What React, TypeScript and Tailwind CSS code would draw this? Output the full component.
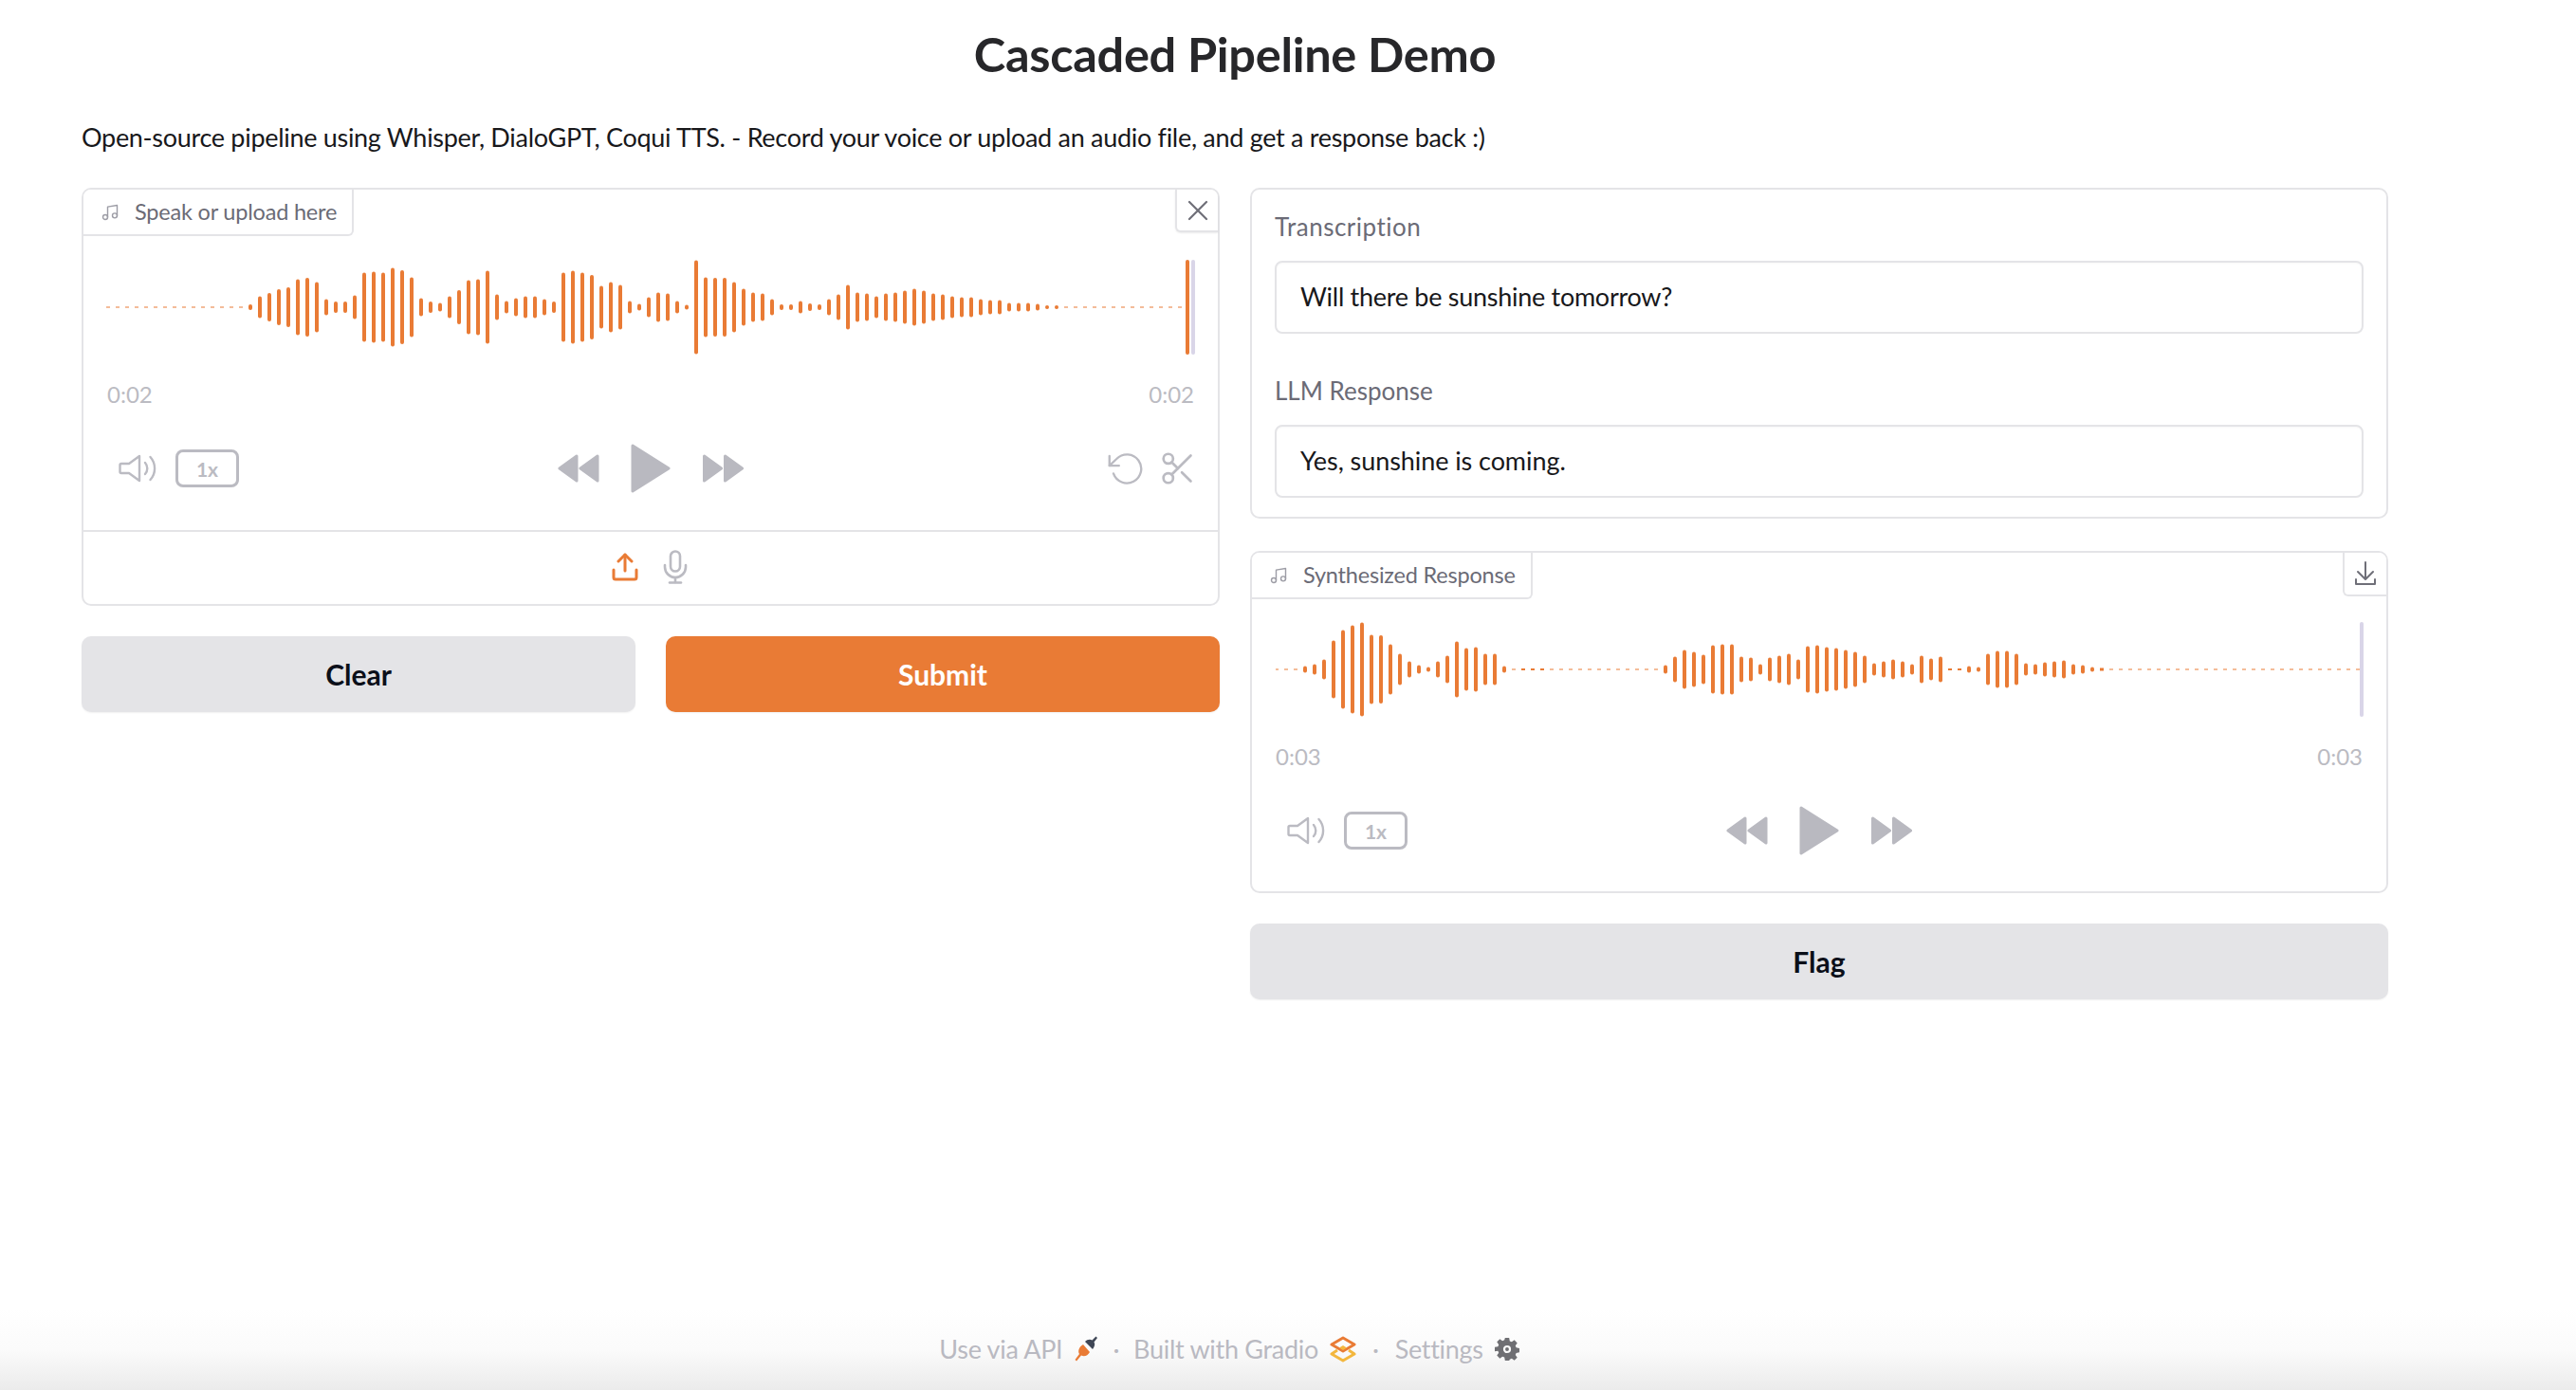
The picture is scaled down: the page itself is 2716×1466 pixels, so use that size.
const ORANGE = "#e97b35";

const leftA = [6,23,30,38,42,59,62,53,17,12,12,25,73,75,73,83,78,63,19,12,9,23,36,57,59,77,27,13,19,23,23,17,12,73,77,73,68,45,53,47,13,7,21,31,29,13,5,99,63,62,62,53,39,31,29,17,6,6,13,8,6,17,27,47,31,29,23,29,31,35,39,35,29,27,23,21,21,17,15,15,9,9,9,7,4,4];
const synthA = [7,11,21,61,83,93,99,73,72,53,33,17,9,5,17,29,59,45,47,33,33,7];
const synthB = [9,27,41,37,31,51,53,53,27,25,11,25,29,33,21,49,51,47,45,41,37,29,13,17,21,17,11,29,23,27,2,2,7,5,33,39,39,33,13,11,15,17,19,11,9,5,3];

function leftBars() {
  const out: { x: number; h: number }[] = [];
  for (let i = 0; i < 15; i++) out.push({ x: 114 + i * 10, h: 1 });
  leftA.forEach((h, i) => out.push({ x: 264 + i * 10, h }));
  for (let i = 0; i < 13; i++) out.push({ x: 1124 + i * 10, h: 1 });
  return out;
}

function synthBars() {
  const out: { x: number; h: number }[] = [];
  for (let i = 0; i < 3; i++) out.push({ x: 1346 + i * 10, h: 1 });
  synthA.forEach((h, i) => out.push({ x: 1376 + i * 10, h }));
  for (let i = 0; i < 16; i++) out.push({ x: 1596 + i * 10, h: i > 0 && i < 4 ? 2 : 1 });
  synthB.forEach((h, i) => out.push({ x: 1756 + i * 10, h }));
  for (let i = 0; i < 27; i++) out.push({ x: 2226 + i * 10, h: 1 });
  return out;
}

function Wave({ bars, originX, extra }: { bars: { x: number; h: number }[]; originX: number; extra: React.ReactNode }) {
  return (
    <svg width="1152" height="100" viewBox={`${originX} 0 1152 100`} className="block">
      {bars.map((b, i) => (
        <rect key={i} x={b.x - 2} y={50 - b.h / 2} width="4" height={b.h} rx={b.h > 3 ? 2 : 0} fill={ORANGE} />
      ))}
      {extra}
    </svg>
  );
}

function MusicIcon() {
  return (
    <svg width="20" height="20" viewBox="0 0 24 24" fill="none" stroke="#9d9da6" strokeWidth="1.7" strokeLinecap="round" strokeLinejoin="round">
      <path d="M9 18V5l12-2v13" />
      <circle cx="6" cy="18" r="3" />
      <circle cx="18" cy="16" r="3" />
    </svg>
  );
}

function Volume() {
  return (
    <svg width="40" height="30" viewBox="0 0 40 30" fill="none" stroke="#bbbbc2" strokeWidth="2.4" strokeLinecap="round" strokeLinejoin="round">
      <path d="M22 2 L11 10 H3 a1.5 1.5 0 0 0 -1.5 1.5 V18.5 a1.5 1.5 0 0 0 1.5 1.5 H11 L22 28 Z" />
      <path d="M28 9 a9 9 0 0 1 0 12" />
      <path d="M33.500 3 a18 18 0 0 1 0 24" />
    </svg>
  );
}

function Rewind() {
  return (
    <svg width="44" height="30" viewBox="0 0 44 30" fill="#b9b9c0" stroke="#b9b9c0" strokeWidth="3" strokeLinejoin="round">
      <path d="M20 2 L2 15 L20 28 Z" />
      <path d="M42 2 L24 15 L42 28 Z" />
    </svg>
  );
}

function Forward() {
  return (
    <svg width="45" height="30" viewBox="0 0 44 30" fill="#b9b9c0" stroke="#b9b9c0" strokeWidth="3" strokeLinejoin="round">
      <path d="M2 2 L20 15 L2 28 Z" />
      <path d="M24 2 L42 15 L24 28 Z" />
    </svg>
  );
}

function Play() {
  return (
    <svg width="42" height="52" viewBox="0 0 42 52" fill="#b9b9c0" stroke="#b9b9c0" strokeWidth="3" strokeLinejoin="round">
      <path d="M2 2 L40 26 L2 50 Z" />
    </svg>
  );
}

function Speed() {
  return (
    <div className="w-[67px] h-[40px] ml-[20px] border-[3px] border-[#bbbbc2] rounded-[8px] flex items-center justify-center text-[#bbbbc2] text-[21px] font-bold leading-none">
      1x
    </div>
  );
}

function Undo() {
  return (
    <svg width="37" height="36" viewBox="0 1 22 21.500" fill="none" stroke="#bbbbc2" strokeWidth="1.4" strokeLinecap="round" strokeLinejoin="round">
      <polyline points="1 4 1 10 7 10" />
      <path d="M3.51 15a9 9 0 1 0 2.13-9.36L1 10" />
    </svg>
  );
}

function Scissors() {
  return (
    <svg width="33" height="34" viewBox="2 2 19.500 20" fill="none" stroke="#bbbbc2" strokeWidth="1.6" strokeLinecap="round" strokeLinejoin="round">
      <circle cx="6" cy="6" r="3" />
      <circle cx="6" cy="18" r="3" />
      <line x1="20" y1="4" x2="8.12" y2="15.88" />
      <line x1="14.47" y1="14.48" x2="20" y2="20" />
      <line x1="8.12" y1="8.12" x2="12" y2="12" />
    </svg>
  );
}

function Controls({ right }: { right?: boolean }) {
  return (
    <div className="grid grid-cols-[1fr_auto_1fr] items-center h-[52px] mt-[35px] px-[37px]">
      <div className="flex items-center">
        <Volume />
        <Speed />
      </div>
      <div className="flex items-center gap-[33px]">
        <Rewind />
        <Play />
        <Forward />
      </div>
      <div className="flex items-center justify-end gap-[20px] -mr-[11px]">
        {right && (
          <>
            <Undo />
            <Scissors />
          </>
        )}
      </div>
    </div>
  );
}

function Times({ t }: { t: string }) {
  return (
    <div className="flex justify-between px-[25px] mt-[25px] text-[24px] leading-[34px] text-[#bbbbc2]">
      <span>{t}</span>
      <span>{t}</span>
    </div>
  );
}

function Tab({ label }: { label: string }) {
  return (
    <div className="absolute left-0 top-0 h-[49px] flex items-center gap-[16px] pl-[18px] pr-[16px] bg-white border-r-2 border-b-2 border-[#e4e4e7] rounded-br-[6px] rounded-tl-[8px]">
      <MusicIcon />
      <span className="text-[23.500px] text-[#6b6b76] leading-none tracking-[-0.2px]">{label}</span>
    </div>
  );
}

function Upload() {
  return (
    <svg width="28" height="30" viewBox="0 0 28 30" fill="none" stroke={ORANGE} strokeWidth="3" strokeLinecap="round" strokeLinejoin="round">
      <path d="M14 19 V2" />
      <path d="M7 9 L14 2 L21 9" />
      <path d="M2 18 V26 a2 2 0 0 0 2 2 H24 a2 2 0 0 0 2 -2 V18" />
    </svg>
  );
}

function Mic() {
  return (
    <svg width="26" height="36" viewBox="0 0 26 36" fill="none" stroke="#bbbbc2" strokeWidth="2.6" strokeLinecap="round" strokeLinejoin="round">
      <rect x="8" y="1.500" width="10" height="21" rx="5" />
      <path d="M2 16 V18 a11 11 0 0 0 22 0 V16" />
      <path d="M13 29 V34" />
      <path d="M7 34.500 H19" />
    </svg>
  );
}

function Field({ label, value, first, labelClass, valueClass }: { label: string; value: string; first?: boolean; labelClass: string; valueClass: string }) {
  return (
    <div className={first ? "" : "mt-[43px]"}>
      <div className={`text-[26px] leading-[34px] text-[#6b6b76] ${labelClass}`}>{label}</div>
      <div className={`mt-[19px] h-[77px] border-2 border-[#e4e4e7] rounded-[8px] flex items-center px-[25px] text-[27px] text-[#18181b] shadow-[inset_0_1px_2px_rgba(0,0,0,0.03)] ${valueClass}`}>
        {value}
      </div>
    </div>
  );
}

function Btn({ children, orange }: { children: string; orange?: boolean }) {
  return (
    <div
      className={`flex-1 h-[80px] rounded-[10px] flex items-center justify-center text-[30px] font-bold shadow-[0_1px_2px_rgba(0,0,0,0.06)] ${
        orange ? "bg-[#e97b35] text-white" : "bg-[#e4e4e7] text-[#0b0f19]"
      }`}
    >
      {children}
    </div>
  );
}

function PlugIcon() {
  return (
    <svg width="26" height="28" viewBox="0 0 26 28">
      <path d="M12 6 L20 14 C22 11 23 9 21.500 6.500 L25 2 L23.500 0.500 L19.500 4.500 C17 3 14 4 12 6 Z" fill="#3f4756" />
      <path d="M10 9 L17 17 C15 21 11 22 8 20.500 L3 26.500 L1.500 25 L6 19 C4 16 6 11 10 9 Z" fill="#e97b35" />
    </svg>
  );
}

function GradioLogo() {
  return (
    <svg width="28" height="28" viewBox="0 0 28 28" fill="none" strokeWidth="3" strokeLinejoin="round">
      <path d="M14 2 L26 9 L14 16 L2 9 Z" stroke="#e97b35" />
      <path d="M8 15 L2 19 L14 26 L26 19 L20 15" stroke="#f3b73e" />
      <path d="M14 10 L18 12.500 L14 15 L10 12.500 Z" fill="#f3b73e" stroke="none" />
    </svg>
  );
}

function Gear() {
  return (
    <svg width="26" height="26" viewBox="0 0 24 24" fill="#6f6f73">
      <path
        fillRule="evenodd"
        d="M10 1h4l.6 3.100 1.900.8 2.600-1.800 2.800 2.800-1.800 2.600.8 1.900 3.100.6v4l-3.100.6-.8 1.900 1.800 2.600-2.800 2.800-2.600-1.800-1.900.8L14 23h-4l-.6-3.100-1.900-.8-2.600 1.800-2.800-2.800 1.800-2.600-.8-1.900L0 14v-4l3.100-.6.8-1.900L2.100 4.900l2.800-2.800 2.600 1.800 1.900-.8L10 1Zm2 7.200a3.800 3.800 0 1 0 0 7.600 3.800 3.800 0 0 0 0-7.600Zm0 2a1.800 1.800 0 1 1 0 3.600 1.800 1.800 0 0 1 0-3.600Z"
      />
    </svg>
  );
}

export default function App() {
  return (
    <div className="w-[2716px] h-[1466px] flex flex-col bg-white overflow-hidden font-['Lato','Noto_Sans',sans-serif] text-[#18181b]">
      <div className="w-[2432px] ml-[86px]">
        <h1 className="h-[44px] mt-[35px] text-center text-[50.500px] leading-[44px] font-bold text-[#27272a] tracking-[-0.3px]">
          Cascaded Pipeline Demo
        </h1>
        <p className="mt-[46px] h-[40px] text-[27px] leading-[40px] text-[#18181b] tracking-[-0.3px]">
          Open-source pipeline using Whisper, DialoGPT, Coqui TTS. - Record your voice or upload an audio file, and get a response back :)
        </p>
        <div className="mt-[33px] flex gap-[32px] items-start">
          <div className="w-[1200px] flex flex-col gap-[32px]">
            <div className="relative h-[441px] border-2 border-[#e4e4e7] rounded-[10px] flex flex-col">
              <Tab label="Speak or upload here" />
              <button className="absolute right-0 top-0 w-[45px] h-[45px] bg-white border-l-2 border-b-2 border-[#e4e4e7] rounded-bl-[6px] rounded-tr-[8px] flex items-center justify-center shadow-[0_1px_2px_rgba(0,0,0,0.08)]">
                <svg width="22" height="22" viewBox="0 0 22 22" stroke="#6f6f78" strokeWidth="2.200" strokeLinecap="round">
                  <path d="M2 2 L20 20 M20 2 L2 20" />
                </svg>
              </button>
              <div className="pt-[74px] pl-[22px]">
                <Wave
                  bars={leftBars()}
                  originX={110}
                  extra={
                    <>
                      <rect x="1250" y="0" width="4" height="100" rx="2" fill={ORANGE} />
                      <rect x="1256" y="0" width="4" height="100" rx="2" fill="#d9d5e8" />
                    </>
                  }
                />
              </div>
              <Times t="0:02" />
              <Controls right />
              <div className="mt-[39px] flex-1 border-t-2 border-[#e4e4e7] flex items-center justify-center gap-[26px] pb-[2px] pr-[2px]">
                <Upload />
                <Mic />
              </div>
            </div>
            <div className="flex gap-[32px]">
              <Btn>Clear</Btn>
              <Btn orange>Submit</Btn>
            </div>
          </div>
          <div className="w-[1200px] flex flex-col">
            <div className="h-[349px] border-2 border-[#e4e4e7] rounded-[10px] px-[24px] pt-[22px]">
              <Field first label="Transcription" value="Will there be sunshine tomorrow?" labelClass="tracking-[0.5px]" valueClass="tracking-[-0.28px]" />
              <Field label="LLM Response" value="Yes, sunshine is coming." labelClass="tracking-[0px]" valueClass="tracking-[-0.07px]" />
            </div>
            <div className="relative h-[361px] mt-[34px] border-2 border-[#e4e4e7] rounded-[10px] flex flex-col">
              <Tab label="Synthesized Response" />
              <button className="absolute right-0 top-0 w-[46px] h-[46px] bg-white border-l-2 border-b-2 border-[#e4e4e7] rounded-bl-[6px] rounded-tr-[8px] flex items-center justify-center">
                <svg width="24" height="26" viewBox="0 0 24 26" fill="none" stroke="#6f6f78" strokeWidth="2" strokeLinecap="round" strokeLinejoin="round">
                  <path d="M12 1 V18" />
                  <path d="M4 11 L12 19 L20 11" />
                  <path d="M2 19 V24 H22 V19" />
                </svg>
              </button>
              <div className="pt-[73px] pl-[25px]">
                <Wave
                  bars={synthBars()}
                  originX={1345}
                  extra={<rect x="2488" y="0" width="4" height="100" rx="2" fill="#d9d5e8" />}
                />
              </div>
              <Times t="0:03" />
              <Controls />
            </div>
            <div className="mt-[32px] flex">
              <Btn>Flag</Btn>
            </div>
          </div>
        </div>
      </div>
      <div className="mt-auto h-[86px] pr-[124px] flex items-center justify-center text-[27px] text-[#b9b9c1] tracking-[-0.3px] bg-gradient-to-b from-white via-[#fbfbfb] to-[#ebebeb]">
        <span>Use via API</span>
        <span className="ml-[12px] flex"><PlugIcon /></span>
        <span className="mx-[15px]">·</span>
        <span>Built with Gradio</span>
        <span className="ml-[12px] flex"><GradioLogo /></span>
        <span className="mx-[17px]">·</span>
        <span>Settings</span>
        <span className="ml-[12px] flex"><Gear /></span>
      </div>
    </div>
  );
}
